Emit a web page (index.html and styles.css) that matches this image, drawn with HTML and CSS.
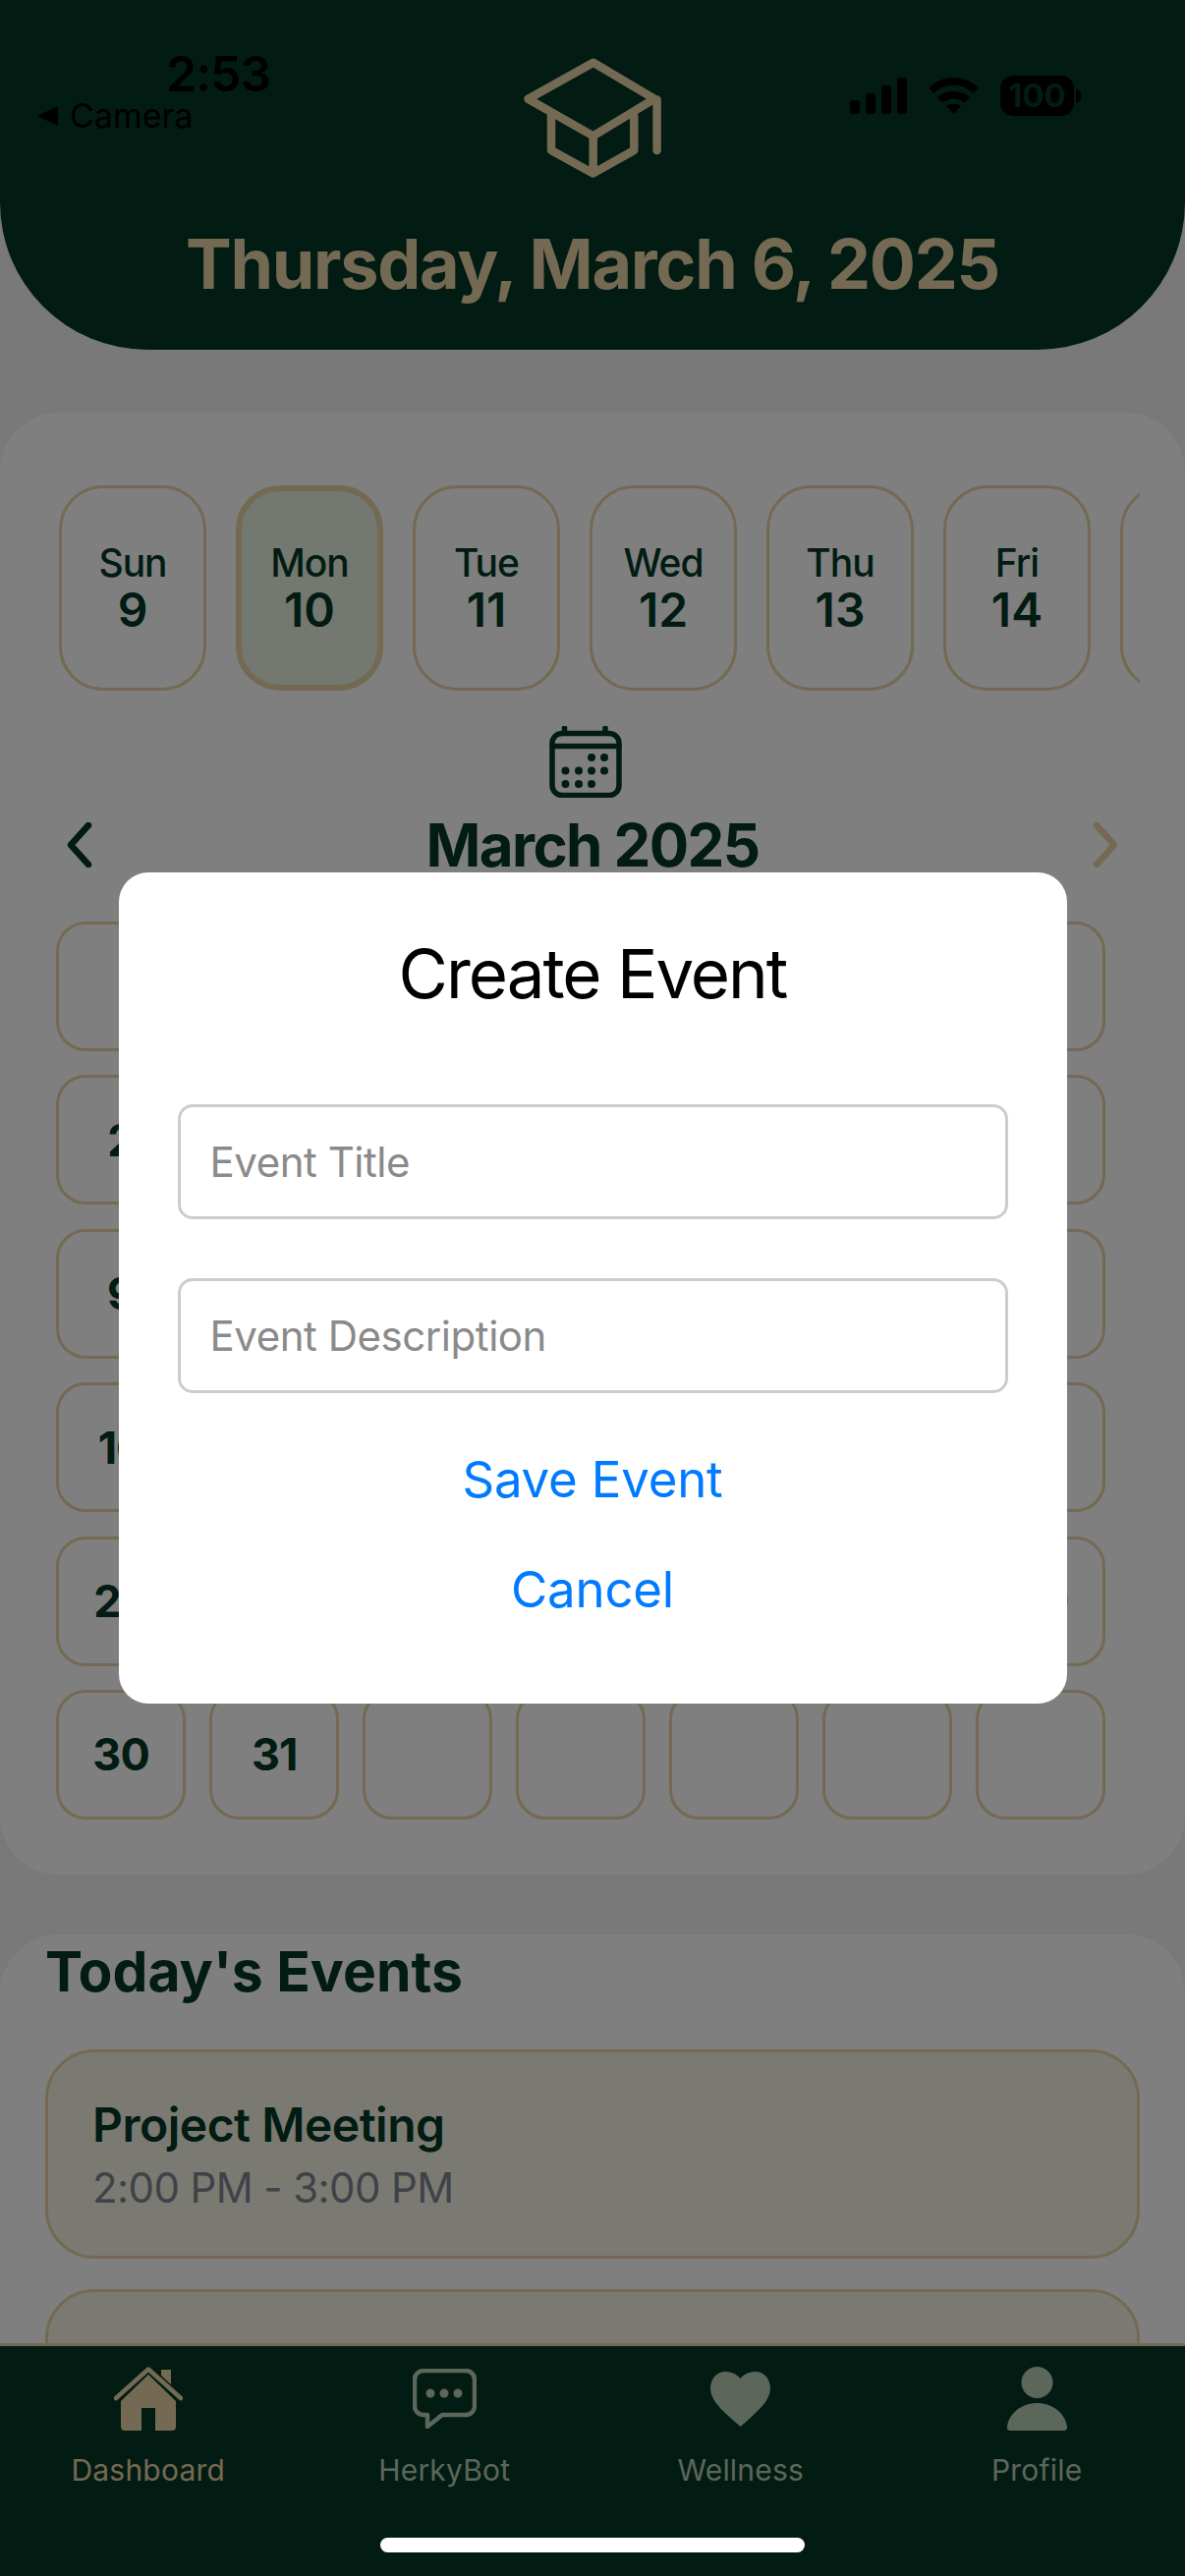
FILE: index.html
```html
<!DOCTYPE html>
<html>
  <head>
    <meta charset="utf-8">
    <title>Dashboard</title>
    <link rel="stylesheet" href="styles.css">
  </head>
  <body>
  <header class="top">
    <svg class="logo" width="140" height="122" viewBox="0 0 140 122">
      <path d="M70.7 4.7 4.5 41.7 70.7 79.4 133 41.7Z"/>
      <path d="M28 59V94L70.7 117.4 112.3 94V59M70.7 79.4V117M135.6 42.4V94"/>
    </svg>
    <h1 class="today">Thursday, March 6, 2025</h1>
  </header>

  <div class="status">
    <div class="status-left">
      <div class="clock">2:53</div>
      <div class="back">
        <svg width="21" height="20" viewBox="0 0 21 20"><path d="M21 0V20L0 10Z"/></svg>
        <span>Camera</span>
      </div>
    </div>
    <div class="status-right">
      <svg width="58" height="37" viewBox="0 0 58 37">
        <rect x="0" y="23" width="10" height="14" rx="3"/>
        <rect x="16" y="16" width="10" height="21" rx="3"/>
        <rect x="32" y="8" width="10" height="29" rx="3"/>
        <rect x="48" y="0" width="10" height="37" rx="3"/>
      </svg>
      <svg width="51" height="37" viewBox="0 0 51 37">
        <path d="M0 10.5C14-3.5 37-3.5 51 10.5L45.5 16C34 5 17 5 5.500 16Z"/>
        <path d="M9 20C18 12 33 12 42 20L36.500 25.500C30 20 21 20 14.500 25.500Z"/>
        <path d="M18 29C22 26 29 26 33 29L25.500 37Z"/>
      </svg>
      <div class="battery"><span class="battery-level">100</span><span class="battery-nub"></span></div>
    </div>
  </div>

  <main class="content">
    <section class="card calendar">
      <div class="week">
        <div class="day"><span>Sun</span><b>9</b></div>
        <div class="day selected"><span>Mon</span><b>10</b></div>
        <div class="day"><span>Tue</span><b>11</b></div>
        <div class="day"><span>Wed</span><b>12</b></div>
        <div class="day"><span>Thu</span><b>13</b></div>
        <div class="day"><span>Fri</span><b>14</b></div>
        <div class="day"><span>Sat</span><b>15</b></div>
      </div>

      <div class="cal-icon">
        <svg width="74" height="73" viewBox="0 0 74 73">
          <rect class="line" x="3" y="7.500" width="68" height="63" rx="10"/>
          <path class="line" d="M3 20.500H71M15.500 2V7M57 2V7"/>
          <circle cx="43" cy="32" r="4"/><circle cx="56" cy="32" r="4"/>
          <circle cx="16.500" cy="45.500" r="4"/><circle cx="30" cy="45.500" r="4"/><circle cx="43" cy="45.500" r="4"/><circle cx="56" cy="45.500" r="4"/>
          <circle cx="16.500" cy="59" r="4"/><circle cx="30" cy="59" r="4"/><circle cx="43" cy="59" r="4"/>
        </svg>
      </div>

      <div class="month-row">
        <svg class="chev" width="26" height="46" viewBox="0 0 26 46"><path d="M22 3 4 23 22 43"/></svg>
        <h2 class="month">March 2025</h2>
        <svg class="chev next" width="26" height="46" viewBox="0 0 26 46"><path d="M4 3 22 23 4 43"/></svg>
      </div>

      <div class="grid">
        <div class="cell"></div><div class="cell"></div><div class="cell"></div><div class="cell"></div><div class="cell"></div><div class="cell"></div><div class="cell">1</div>
        <div class="cell">2</div><div class="cell">3</div><div class="cell">4</div><div class="cell">5</div><div class="cell">6</div><div class="cell">7</div><div class="cell">8</div>
        <div class="cell">9</div><div class="cell">10</div><div class="cell">11</div><div class="cell">12</div><div class="cell">13</div><div class="cell">14</div><div class="cell">15</div>
        <div class="cell">16</div><div class="cell">17</div><div class="cell">18</div><div class="cell">19</div><div class="cell">20</div><div class="cell">21</div><div class="cell">22</div>
        <div class="cell">23</div><div class="cell">24</div><div class="cell">25</div><div class="cell">26</div><div class="cell">27</div><div class="cell">28</div><div class="cell">29</div>
        <div class="cell">30</div><div class="cell">31</div><div class="cell"></div><div class="cell"></div><div class="cell"></div><div class="cell"></div><div class="cell"></div>
      </div>
    </section>

    <section class="card events">
      <h2 class="events-title">Today's Events</h2>
      <div class="event">
        <div class="event-name">Project Meeting</div>
        <div class="event-time">2:00 PM - 3:00 PM</div>
      </div>
      <div class="event"></div>
    </section>
  </main>

  <nav class="tabs">
    <div class="tab active">
      <div class="tab-icon">
        <svg width="70" height="65" viewBox="0 0 70 65">
          <path d="M48 3H58V18L48 9Z"/>
          <path d="M35 8 7 35V61A4 4 0 0 0 11 65H28V42H42V65H59A4 4 0 0 0 63 61V35Z"/>
          <path class="roof" d="M2 32 35 2.500 68 32"/>
        </svg>
      </div>
      <span>Dashboard</span>
    </div>
    <div class="tab">
      <div class="tab-icon">
        <svg width="65" height="61" viewBox="0 0 65 61">
          <path class="bubble" d="M11 2H54A9 9 0 0 1 63 11V38A9 9 0 0 1 54 47H30L15 59V47H11A9 9 0 0 1 2 38V11A9 9 0 0 1 11 2Z"/>
          <circle cx="18" cy="25" r="4.500"/><circle cx="32" cy="25" r="4.500"/><circle cx="46" cy="25" r="4.500"/>
        </svg>
      </div>
      <span>HerkyBot</span>
    </div>
    <div class="tab">
      <div class="tab-icon">
        <svg width="61" height="56" viewBox="0 0 61 56">
          <path d="M30.500 56C20 46 0 32 0 17 0 7 7 0 15 0 22 0 27 3 30.500 7 34 3 39 0 46 0 54 0 61 7 61 17 61 32 41 46 30.500 56Z"/>
        </svg>
      </div>
      <span>Wellness</span>
    </div>
    <div class="tab">
      <div class="tab-icon">
        <svg width="61" height="65" viewBox="0 0 61 65">
          <circle cx="30.500" cy="16" r="16"/>
          <path d="M3 65H58A3 3 0 0 0 61 61C59 47 46 37 30.500 37 15 37 2 47 0 61A3 3 0 0 0 3 65Z"/>
        </svg>
      </div>
      <span>Profile</span>
    </div>
  </nav>

  <div class="backdrop">
    <div class="modal">
      <h2 class="modal-title">Create Event</h2>
      <input class="field" type="text" placeholder="Event Title">
      <input class="field" type="text" placeholder="Event Description">
      <button class="link save">Save Event</button>
      <button class="link">Cancel</button>
    </div>
  </div>

  <div class="home-bar"></div>
  </body>
</html>
```

FILE: styles.css
```css
* {
  box-sizing: border-box;
}

html, body {
  margin: 0;
  height: 100%;
}

body {
  --green: #043927;
  --gold: #e8d2a4;
  display: flex;
  flex-direction: column;
  position: relative;
  width: 1206px;
  height: 2622px;
  overflow: hidden;
  background: #f2f2f2;
  color: var(--green);
  font-family: Inter, "Liberation Sans", sans-serif;
}

/* header */
.top {
  flex: none;
  height: 356px;
  padding-top: 59px;
  background: var(--green);
  border-radius: 0 0 150px 150px;
  text-align: center;
}

.logo {
  display: block;
  margin: 0 auto;
  fill: none;
  stroke: var(--gold);
  stroke-width: 8.5;
  stroke-linecap: round;
  stroke-linejoin: round;
}

.today {
  margin: 44px 0 0;
  font-size: 70px;
  line-height: 87px;
  font-weight: 700;
  letter-spacing: -1.3px;
  color: var(--gold);
}

/* status bar */
.status {
  position: absolute;
  top: 0;
  left: 0;
  right: 0;
  display: flex;
  justify-content: space-between;
  padding: 45px 106px 0 38px;
  color: #000;
}

.clock {
  margin-left: 131px;
  font-size: 50px;
  line-height: 60px;
  font-weight: 600;
  letter-spacing: -1px;
}

.back {
  display: flex;
  align-items: center;
  gap: 12px;
  margin-top: -5px;
  font-size: 34px;
  line-height: 36px;
}

.status-right {
  display: flex;
  align-items: center;
  gap: 22px;
  margin-top: 32px;
  height: 41px;
}

.battery {
  display: flex;
  align-items: center;
  gap: 2px;
}

.battery-level {
  width: 75px;
  height: 41px;
  border-radius: 13px;
  background: #000;
  color: var(--green);
  font-size: 33px;
  line-height: 41px;
  font-weight: 700;
  text-align: center;
}

.battery-nub {
  width: 5px;
  height: 14px;
  border-radius: 0 7px 7px 0;
  background: #000;
}

/* scrolling content */
.content {
  flex: 1;
  min-height: 0;
  overflow: hidden;
  padding-top: 64px;
}

.card {
  background: #fff;
  border-radius: 60px 60px 60px 60px;
}

.calendar {
  height: 1488px;
  padding-top: 74px;
}

.week {
  display: flex;
  gap: 30px;
  margin: 0 46px;
  padding-left: 14px;
  overflow: hidden;
}

.day {
  flex: none;
  display: flex;
  flex-direction: column;
  align-items: center;
  justify-content: center;
  width: 150px;
  height: 209px;
  padding-bottom: 3px;
  border: 3.5px solid var(--gold);
  border-radius: 45px;
}

.day span {
  font-size: 39px;
  line-height: 48px;
  font-weight: 550;
  letter-spacing: -1px;
}

.day b {
  font-size: 48px;
  line-height: 48px;
  font-weight: 600;
}

.day.selected {
  border-width: 6px;
  background: #e6f0e0;
}

.cal-icon {
  display: flex;
  justify-content: center;
  margin: 36px 15px 0 0;
  fill: var(--green);
}

.cal-icon svg {
  display: block;
}

.cal-icon .line {
  fill: none;
  stroke: var(--green);
  stroke-width: 5.5;
  stroke-linecap: round;
}

.month-row {
  display: flex;
  align-items: center;
  justify-content: space-between;
  height: 60px;
  margin-top: 18px;
  padding: 0 68px;
}

.month {
  margin: 0;
  font-size: 60px;
  line-height: 60px;
  font-weight: 700;
  letter-spacing: -1.6px;
}

.chev {
  fill: none;
  stroke: var(--green);
  stroke-width: 6.5;
  stroke-linecap: round;
  stroke-linejoin: round;
}

.chev.next {
  stroke: var(--gold);
}

.grid {
  display: grid;
  grid-template-columns: repeat(7, 1fr);
  grid-auto-rows: 132px;
  gap: 24.4px 24px;
  margin-top: 48px;
  padding: 0 80.5px 0 57px;
}

.cell {
  display: flex;
  align-items: center;
  justify-content: center;
  border: 3.5px solid var(--gold);
  border-radius: 30px;
  font-size: 45px;
  font-weight: 700;
  letter-spacing: -1px;
}

.events {
  margin-top: 61px;
  padding: 5px 46px 0;
}

.events-title {
  margin: 0 0 46px;
  font-size: 57px;
  line-height: 66px;
  font-weight: 700;
}

.event {
  height: 213px;
  margin-bottom: 31px;
  padding: 44px 45px 0;
  border: 3px solid var(--gold);
  border-radius: 50px;
  background: #f6f4e4;
}

.event-name {
  font-size: 48px;
  line-height: 60px;
  font-weight: 600;
  letter-spacing: -0.5px;
}

.event-time {
  margin-top: 6px;
  font-size: 42px;
  line-height: 56px;
  letter-spacing: -0.6px;
  color: #7f8590;
}

/* bottom tabs */
.tabs {
  flex: none;
  display: grid;
  grid-template-columns: repeat(4, 1fr);
  height: 237px;
  padding-top: 21px;
  background: var(--green);
  border-top: 3px solid var(--gold);
  color: #b8ccb4;
  fill: #b8ccb4;
}

.tab {
  display: flex;
  flex-direction: column;
  align-items: center;
  gap: 22px;
  font-size: 30px;
  line-height: 36px;
  letter-spacing: 0.2px;
}

.tab.active {
  color: var(--gold);
  fill: var(--gold);
}

.tab-icon {
  display: flex;
  align-items: center;
  height: 65px;
}

.roof, .bubble {
  fill: none;
  stroke: var(--gold);
  stroke-width: 4.500;
  stroke-linecap: round;
  stroke-linejoin: round;
}

.bubble {
  stroke: #b8ccb4;
}

/* create event dialog */
.backdrop {
  position: absolute;
  top: 0;
  left: 0;
  right: 0;
  bottom: 0;
  display: flex;
  align-items: center;
  justify-content: center;
  background: rgba(0, 0, 0, 0.5);
}

.modal {
  display: flex;
  flex-direction: column;
  width: 965px;
  padding: 60px 60px 61px;
  background: #fff;
  border-radius: 30px;
}

.modal-title {
  margin: 0 0 90px;
  color: #000;
  font-size: 69px;
  line-height: 86px;
  font-weight: 400;
  letter-spacing: -2px;
  text-align: center;
}

.field {
  height: 117px;
  margin-bottom: 60px;
  padding: 0 30px;
  border: 3px solid #ccc;
  border-radius: 15px;
  background: #fff;
  font-family: inherit;
  font-size: 42px;
  letter-spacing: -0.45px;
}

.field::placeholder {
  color: #8a8a8a;
}

.field + .field {
  margin-bottom: 31px;
}

.link {
  height: 112px;
  padding: 0;
  border: 0;
  background: none;
  color: #007aff;
  font-family: inherit;
  font-size: 51px;
  letter-spacing: -0.2px;
  text-align: center;
}

.home-bar {
  position: absolute;
  left: 387px;
  bottom: 24px;
  width: 432px;
  height: 15px;
  border-radius: 8px;
  background: #fff;
}
```
